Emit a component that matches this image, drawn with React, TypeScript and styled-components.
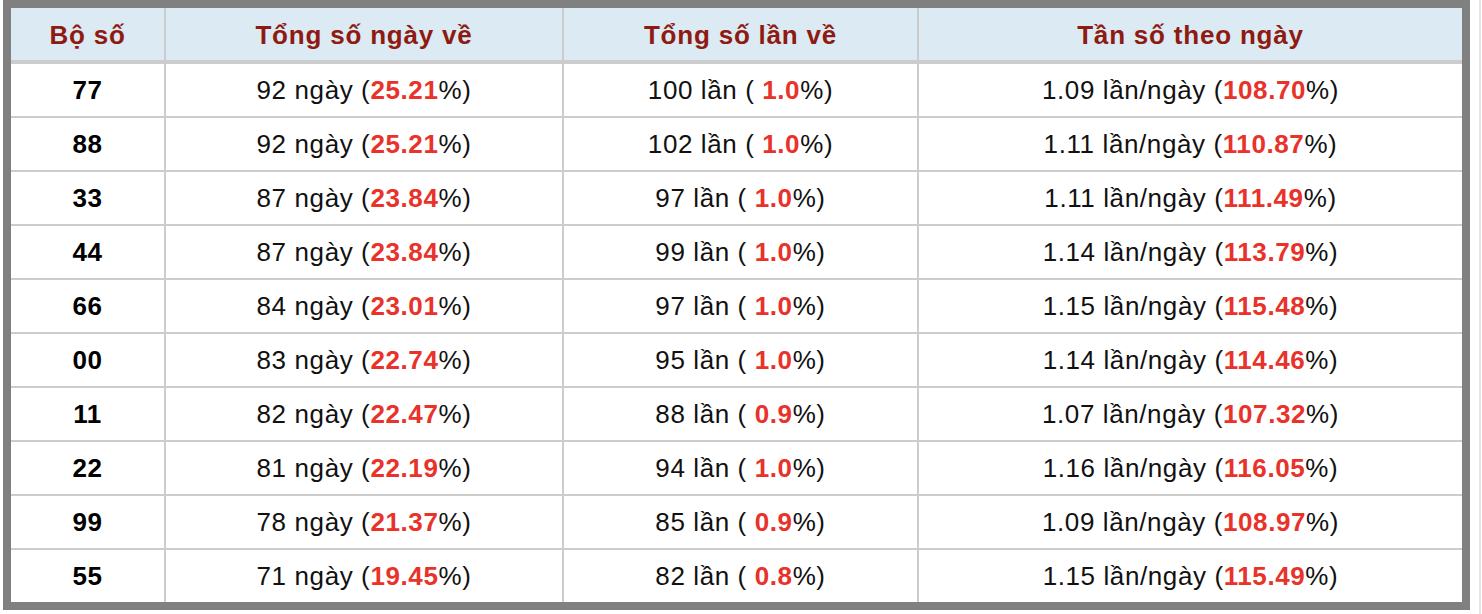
import { FC } from 'react';
import styled, { createGlobalStyle } from 'styled-components';

type Row = {
  pair: string;
  days: number;
  dayPct: string;
  times: number;
  timePct: string;
  rate: string;
  ratePct: string;
};

const rows: Row[] = [
  { pair: '77', days: 92, dayPct: '25.21', times: 100, timePct: '1.0', rate: '1.09', ratePct: '108.70' },
  { pair: '88', days: 92, dayPct: '25.21', times: 102, timePct: '1.0', rate: '1.11', ratePct: '110.87' },
  { pair: '33', days: 87, dayPct: '23.84', times: 97, timePct: '1.0', rate: '1.11', ratePct: '111.49' },
  { pair: '44', days: 87, dayPct: '23.84', times: 99, timePct: '1.0', rate: '1.14', ratePct: '113.79' },
  { pair: '66', days: 84, dayPct: '23.01', times: 97, timePct: '1.0', rate: '1.15', ratePct: '115.48' },
  { pair: '00', days: 83, dayPct: '22.74', times: 95, timePct: '1.0', rate: '1.14', ratePct: '114.46' },
  { pair: '11', days: 82, dayPct: '22.47', times: 88, timePct: '0.9', rate: '1.07', ratePct: '107.32' },
  { pair: '22', days: 81, dayPct: '22.19', times: 94, timePct: '1.0', rate: '1.16', ratePct: '116.05' },
  { pair: '99', days: 78, dayPct: '21.37', times: 85, timePct: '0.9', rate: '1.09', ratePct: '108.97' },
  { pair: '55', days: 71, dayPct: '19.45', times: 82, timePct: '0.8', rate: '1.15', ratePct: '115.49' },
];

const GlobalStyle = createGlobalStyle`
  body {
    margin: 0;
    background: #fff;
    font-family: 'Liberation Sans', Arial, sans-serif;
  }
`;

const App: FC = () => (
  <>
    <GlobalStyle />
    <Page>
      <Table>
        <HeaderRow>
          <HeadCell>Bộ số</HeadCell>
          <HeadCell>Tổng số ngày về</HeadCell>
          <HeadCell>Tổng số lần về</HeadCell>
          <HeadCell>Tần số theo ngày</HeadCell>
        </HeaderRow>
        {rows.map((r) => (
          <BodyRow key={r.pair}>
            <PairCell>{r.pair}</PairCell>
            <Cell>
              <span>
                {`${r.days} ngày (`}
                <Hot>{r.dayPct}</Hot>
                {'%)'}
              </span>
            </Cell>
            <Cell>
              <span>
                {`${r.times} lần (\u00a0`}
                <Hot>{r.timePct}</Hot>
                {'%)'}
              </span>
            </Cell>
            <Cell>
              <span>
                {`${r.rate} lần/ngày (`}
                <Hot>{r.ratePct}</Hot>
                {'%)'}
              </span>
            </Cell>
          </BodyRow>
        ))}
      </Table>
      <ScrollEdge />
    </Page>
  </>
);

export default App;

const Page = styled.div`
  display: flex;
  align-items: flex-start;
  padding-left: 3px;
  gap: 9px;
`;

const Table = styled.div`
  display: flex;
  flex-direction: column;
  gap: 2px;
  width: 1451px;
  border: 8px solid #808080;
  background: #cccccc;
`;

const Columns = styled.div`
  display: grid;
  grid-template-columns: 153px 396px 353px 543px;
  column-gap: 2px;
`;

const HeaderRow = styled(Columns)`
  margin-bottom: 2px;
`;

const BodyRow = styled(Columns)``;

const BaseCell = styled.div`
  height: 52px;
  display: flex;
  align-items: center;
  justify-content: center;
  font-size: 26px;
  letter-spacing: 0.6px;
  white-space: nowrap;
`;

const HeadCell = styled(BaseCell)`
  background: #dbeaf3;
  color: #8e1a12;
  font-weight: bold;
  letter-spacing: 0.8px;
  padding-top: 2px;
  box-sizing: border-box;
`;

const Cell = styled(BaseCell)`
  background: #fff;
  color: #111;
`;

const PairCell = styled(Cell)`
  font-weight: bold;
  color: #000;
`;

const Hot = styled.span`
  color: #e8322a;
  font-weight: bold;
`;

const ScrollEdge = styled.div`
  width: 2px;
  height: 614px;
  background: #e6e6e6;
`;
